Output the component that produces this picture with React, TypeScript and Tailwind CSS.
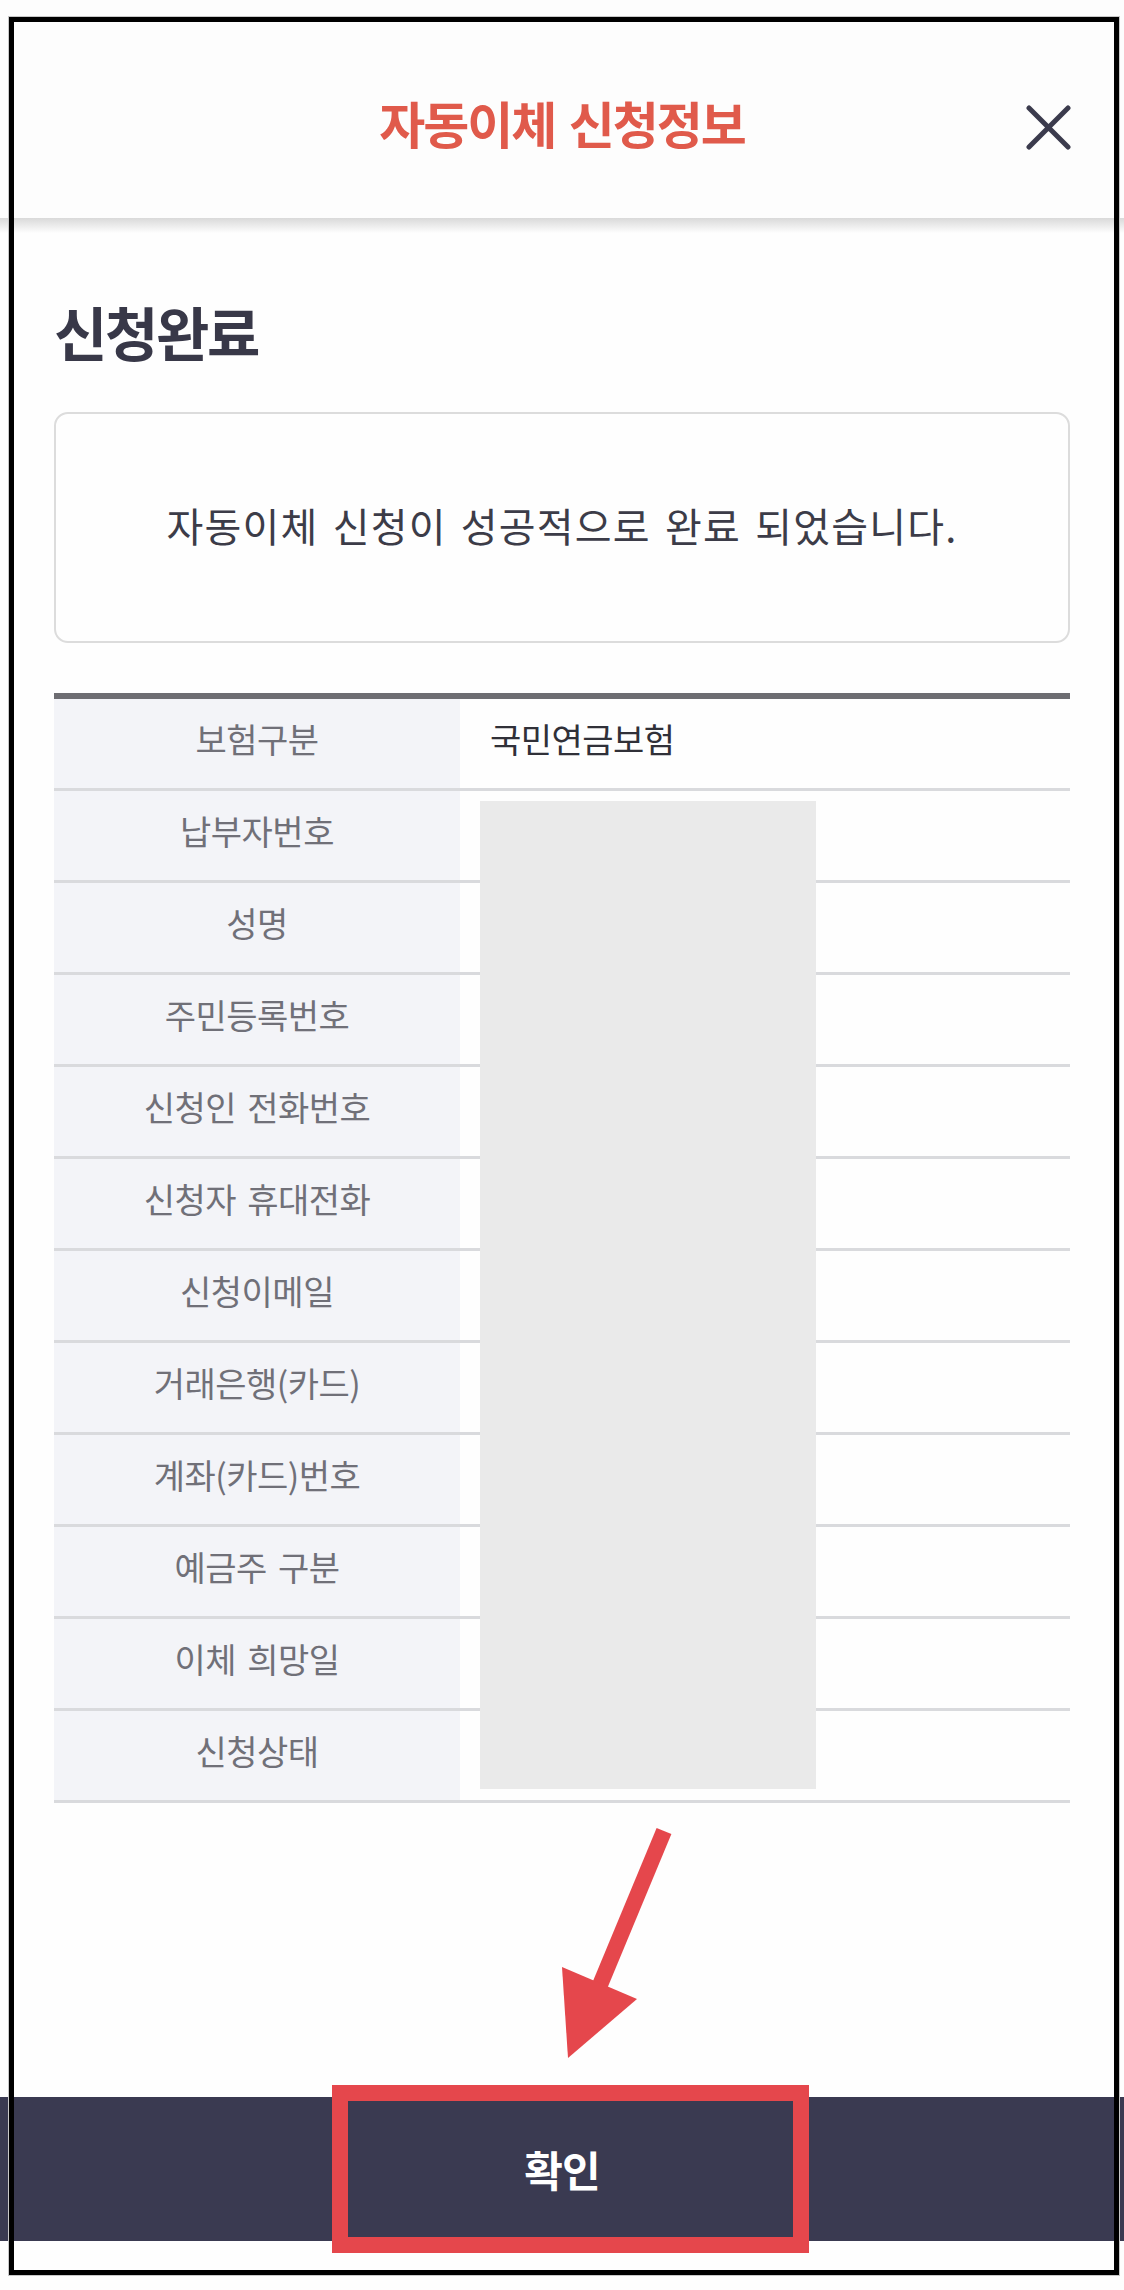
import React from 'react';

const rows: { label: string; value?: string }[] = [
  { label: '보험구분', value: '국민연금보험' },
  { label: '납부자번호' },
  { label: '성명' },
  { label: '주민등록번호' },
  { label: '신청인 전화번호' },
  { label: '신청자 휴대전화' },
  { label: '신청이메일' },
  { label: '거래은행(카드)' },
  { label: '계좌(카드)번호' },
  { label: '예금주 구분' },
  { label: '이체 희망일' },
  { label: '신청상태' },
];

const CloseIcon = () => (
  <svg width="45" height="45" viewBox="0 0 45 45" fill="none">
    <path d="M3 3L42 42M42 3L3 42" stroke="#3b3b4d" strokeWidth="5" strokeLinecap="round" />
  </svg>
);

const App: React.FC = () => {
  return (
    <div className="relative w-[1124px] h-[2290px] overflow-hidden bg-[#fefefe] flex flex-col font-['Noto_Sans_CJK_KR',sans-serif]">
      {/* header */}
      <div className="h-[218px] shrink-0 px-[53px] pt-[26px] grid grid-cols-[45px_1fr_45px] items-center bg-[#fdfdfd]">
        <div />
        <h1 className="text-center text-[50px] leading-none font-bold tracking-[-0.04em] [word-spacing:4px] text-[#e05a4b]">
          자동이체 신청정보
        </h1>
        <button className="mt-[10px]">
          <CloseIcon />
        </button>
      </div>
      <div className="h-[15px] shrink-0 bg-gradient-to-b from-[#d9d9d9] to-[#fefefe]" />

      {/* body */}
      <div className="px-[54px]">
        <h2 className="mt-[69px] text-[58px] leading-none font-bold tracking-[-0.04em] text-[#383848]">신청완료</h2>

        <div className="mt-[52px] h-[231px] rounded-[14px] border-2 border-[#dcdcdc] flex items-center justify-center pb-[5px]">
          <p className="text-[40px] leading-none tracking-[0.03em] [word-spacing:4px] text-[#3c3c48]">
            자동이체 신청이 성공적으로 완료 되었습니다.
          </p>
        </div>

        <div className="relative mt-[50px] border-t-[6px] border-[#6d6d72]">
          {rows.map((r) => (
            <div key={r.label} className="grid grid-cols-[406px_1fr] h-[92px] border-b-[3px] border-[#d9dadd]">
              <div className="bg-[#f3f4f8] flex items-center justify-center pb-[10px] text-[34px] leading-none tracking-[-0.015em] [word-spacing:4px] text-[#707078]">
                {r.label}
              </div>
              <div className="flex items-center pl-[30px] pb-[10px] text-[34px] leading-none tracking-[-0.015em] text-[#303038]">
                {r.value}
              </div>
            </div>
          ))}
          {/* redacted values */}
          <div className="absolute left-[426px] top-[102px] w-[336px] h-[988px] bg-[#eaeaea]" />
        </div>
      </div>

      <div className="mt-auto mb-[49px] h-[144px] shrink-0 bg-[#3a3a51] flex items-center justify-center">
        <span className="text-[42px] leading-none font-bold tracking-[-0.02em] text-white">확인</span>
      </div>

      {/* annotations */}
      <svg className="absolute left-[540px] top-[1815px] pointer-events-none" width="150" height="260" viewBox="0 0 150 260">
        <path d="M124 16L60 170" stroke="#e5474c" strokeWidth="16" />
        <polygon points="22,152 97,184 28,243" fill="#e5474c" />
      </svg>
      <div className="absolute left-[332px] top-[2085px] w-[477px] h-[168px] border-[16px] border-[#e5474c] pointer-events-none" />
      <div className="absolute left-[9px] top-[17px] w-[1110px] h-[2258px] border-[5px] border-black outline outline-1 outline-[#c8c8c8] pointer-events-none" />
    </div>
  );
};

export default App;
